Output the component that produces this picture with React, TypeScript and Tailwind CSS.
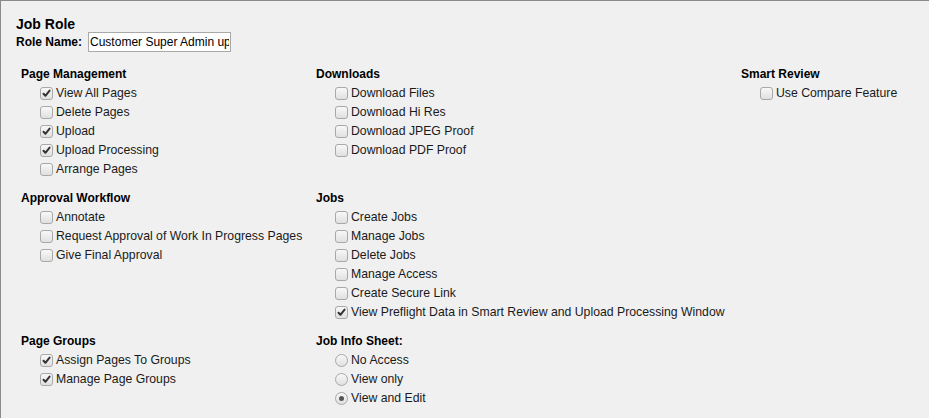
import React from 'react';

type Perm = { label: string; checked?: boolean };

const Box: React.FC<{ checked?: boolean }> = ({ checked }) => (
  <span className="relative inline-block w-[13px] h-[13px] shrink-0 rounded-[3px] border border-[#a8a8a8] bg-gradient-to-b from-[#f8f8f8] to-[#e0e0e0]">
    {checked && (
      <svg className="absolute left-0 top-0" width="11" height="11" viewBox="0 0 11 11">
        <path d="M2.5 5.8 L4.4 7.8 L8.6 2.6" stroke="#333" strokeWidth="2" fill="none" strokeLinecap="round" strokeLinejoin="round" />
      </svg>
    )}
  </span>
);

const Radio: React.FC<{ checked?: boolean }> = ({ checked }) => (
  <span className="inline-flex items-center justify-center w-[13px] h-[13px] shrink-0 rounded-full border border-[#a8a8a8] bg-gradient-to-b from-[#f8f8f8] to-[#e0e0e0]">
    {checked && <span className="w-[5px] h-[5px] rounded-full bg-[#555]" />}
  </span>
);

const Section: React.FC<{ title: string; items: Perm[]; radio?: boolean }> = ({ title, items, radio }) => (
  <div>
    <div className="h-[19px] leading-[19px] font-bold text-black">{title}</div>
    {items.map((it) => (
      <div key={it.label} className="h-[19px] flex items-center pl-[19px]">
        {radio ? <Radio checked={it.checked} /> : <Box checked={it.checked} />}
        <span className="ml-[3px] leading-[19px] text-[12.25px]">{it.label}</span>
      </div>
    ))}
  </div>
);

export default function App() {
  return (
    <div className="min-h-screen bg-[#f0f0f0] border-t border-l border-[#8a8a8a] pt-[13px] px-[15px] font-['Liberation_Sans',Arial,sans-serif] text-[12px] text-[#1a1a1a]">
      <h2 className="text-[14px] font-bold h-[18px] leading-[20px] text-black">Job Role</h2>
      <div className="flex items-center h-[20px]">
        <span className="font-bold text-black">Role Name:</span>
        <input
          readOnly
          value="Customer Super Admin update"
          className="ml-[6px] w-[143px] h-[20px] border border-[#a9a9a9] bg-white px-[1px] text-[12px] text-black outline-none"
        />
      </div>

      <div className="mt-[13px] ml-[5px] grid grid-cols-[295px_425px_1fr] gap-y-[10px]">
        <Section
          title="Page Management"
          items={[
            { label: 'View All Pages', checked: true },
            { label: 'Delete Pages' },
            { label: 'Upload', checked: true },
            { label: 'Upload Processing', checked: true },
            { label: 'Arrange Pages' },
          ]}
        />
        <Section
          title="Downloads"
          items={[
            { label: 'Download Files' },
            { label: 'Download Hi Res' },
            { label: 'Download JPEG Proof' },
            { label: 'Download PDF Proof' },
          ]}
        />
        <Section title="Smart Review" items={[{ label: 'Use Compare Feature' }]} />

        <Section
          title="Approval Workflow"
          items={[
            { label: 'Annotate' },
            { label: 'Request Approval of Work In Progress Pages' },
            { label: 'Give Final Approval' },
          ]}
        />
        <Section
          title="Jobs"
          items={[
            { label: 'Create Jobs' },
            { label: 'Manage Jobs' },
            { label: 'Delete Jobs' },
            { label: 'Manage Access' },
            { label: 'Create Secure Link' },
            { label: 'View Preflight Data in Smart Review and Upload Processing Window', checked: true },
          ]}
        />
        <div />

        <Section
          title="Page Groups"
          items={[
            { label: 'Assign Pages To Groups', checked: true },
            { label: 'Manage Page Groups', checked: true },
          ]}
        />
        <Section
          title="Job Info Sheet:"
          radio
          items={[{ label: 'No Access' }, { label: 'View only' }, { label: 'View and Edit', checked: true }]}
        />
        <div />
      </div>
    </div>
  );
}
